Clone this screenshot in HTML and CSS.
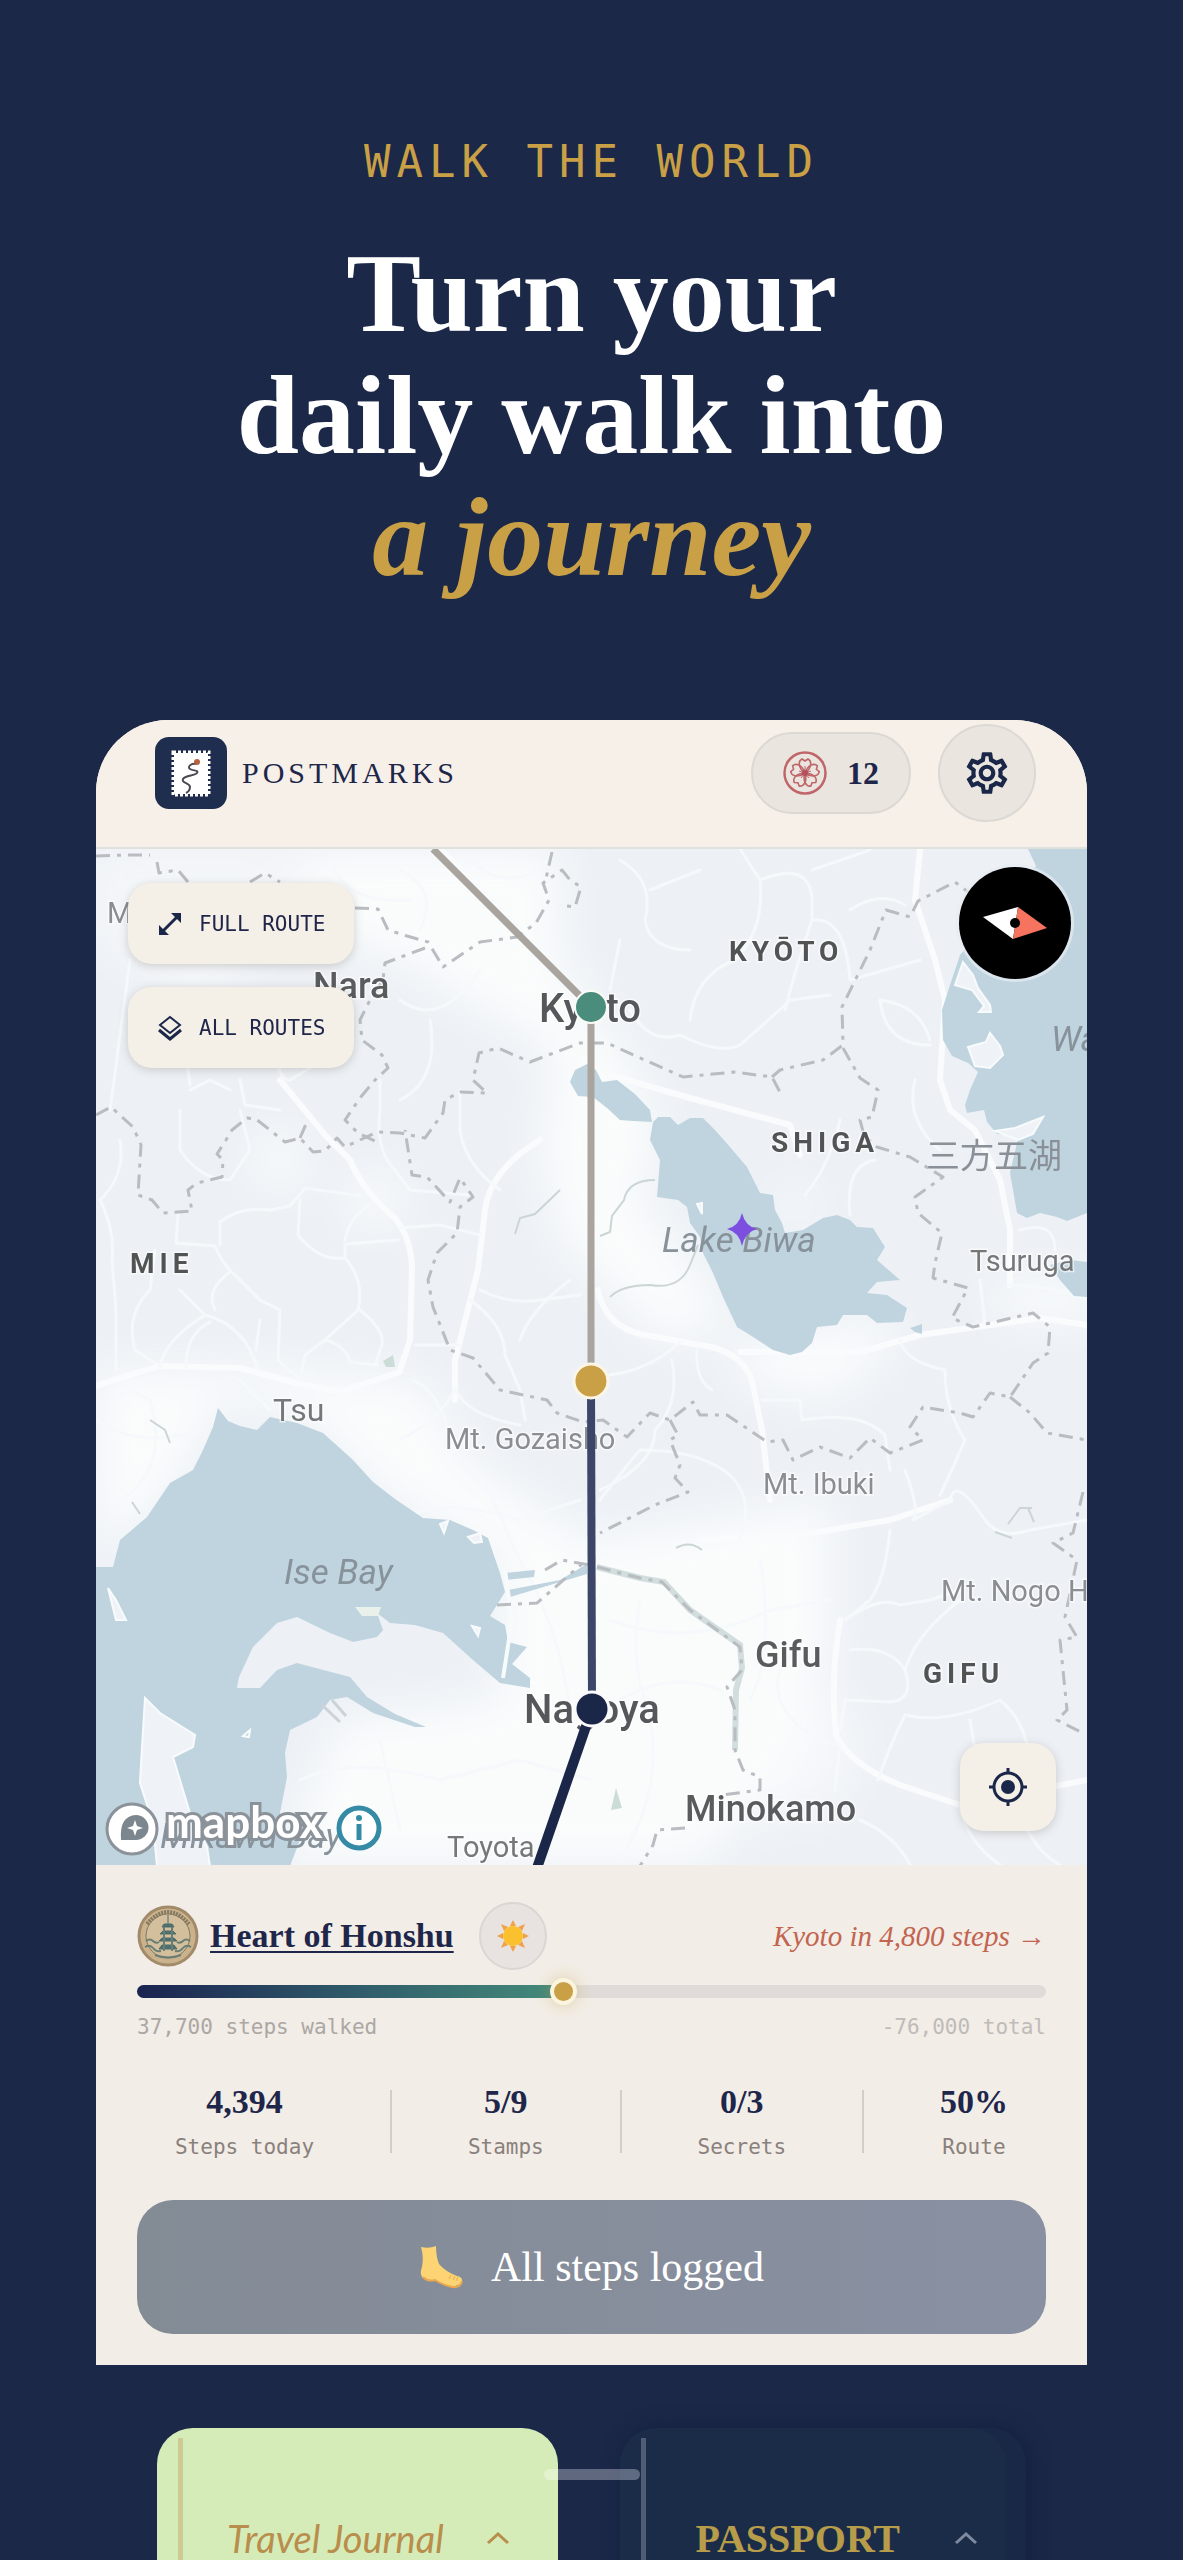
FILE: index.html
```html
<!DOCTYPE html>
<html lang="en">
<head>
  <meta charset="UTF-8" />
  <meta name="viewport" content="width=device-width, initial-scale=1.0" />
  <title>Postmarks - Walk the World</title>
  <link rel="stylesheet" href="styles.css">
</head>
<body>
  <header class="hero">
    <p class="eyebrow">WALK THE WORLD</p>
    <h1>Turn your<br>daily walk into<br><em>a journey</em></h1>
  </header>

  <main class="phone">
    <div class="topbar">
      <div class="brand">
        <svg class="brand-logo" viewBox="0 0 72 72" aria-hidden="true">
          <rect width="72" height="72" rx="14" fill="#1f2e4f"/>
          <rect x="19" y="16" width="34" height="41" fill="#fff"/>
          <rect x="18" y="15" width="36" height="43" fill="none" stroke="#fff" stroke-width="3" stroke-dasharray="3 2"/>
          <path d="M41 27c-5-1-9 3-6 5s9 1 7 4-12 2-14 6 7 4 7 8-2 5-4 6" fill="none" stroke="#4a4a52" stroke-width="2"/>
          <circle cx="42" cy="25" r="3" fill="#b5623f"/>
        </svg>
        <span class="brand-name">POSTMARKS</span>
      </div>
      <div class="topbar-actions">
        <button class="pill" type="button">
          <svg width="44" height="44" viewBox="0 0 44 44" fill="none" stroke="#c0656a" aria-hidden="true">
            <circle cx="22" cy="22" r="20.5" stroke-width="2.5"/>
            <g stroke-width="1.6">
              <path id="petal" d="M22 22C15 17 15 10 19 8l3 2 3-2c4 2 4 9-3 14z"/>
              <use href="#petal" transform="rotate(72 22 22)"/>
              <use href="#petal" transform="rotate(144 22 22)"/>
              <use href="#petal" transform="rotate(216 22 22)"/>
              <use href="#petal" transform="rotate(288 22 22)"/>
            </g>
            <path d="M22 15v7M16 20l6 2M28 20l-6 2M18 27l4-5M26 27l-4-5" stroke-width="1"/>
            <circle cx="22" cy="22" r="3" fill="#b0525c" stroke="none"/>
          </svg>
          <span>12</span>
        </button>
        <button class="round" type="button" aria-label="Settings">
          <svg width="50" height="50" viewBox="0 0 24 24" fill="#1b2748" aria-hidden="true">
            <path d="M19.43 12.98c.04-.32.07-.64.07-.98s-.03-.66-.07-.98l2.11-1.65c.19-.15.24-.42.12-.64l-2-3.46c-.09-.16-.26-.25-.44-.25-.06 0-.12.01-.17.03l-2.49 1c-.52-.4-1.08-.73-1.69-.98l-.38-2.65C14.46 2.18 14.25 2 14 2h-4c-.25 0-.46.18-.49.42l-.38 2.65c-.61.25-1.17.59-1.69.98l-2.49-1c-.06-.02-.12-.03-.18-.03-.17 0-.34.09-.43.25l-2 3.46c-.13.22-.07.49.12.64l2.11 1.65c-.04.32-.07.65-.07.98s.03.66.07.98l-2.11 1.65c-.19.15-.24.42-.12.64l2 3.46c.09.16.26.25.44.25.06 0 .12-.01.17-.03l2.49-1c.52.4 1.08.73 1.69.98l.38 2.65c.03.24.24.42.49.42h4c.25 0 .46-.18.49-.42l.38-2.65c.61-.25 1.17-.59 1.69-.98l2.49 1c.06.02.12.03.18.03.17 0 .34-.09.43-.25l2-3.46c.12-.22.07-.49-.12-.64l-2.11-1.65zm-1.98-1.71c.04.31.05.52.05.73 0 .21-.02.43-.05.73l-.14 1.13.89.7 1.08.84-.7 1.21-1.27-.51-1.04-.42-.9.68c-.43.32-.84.56-1.25.73l-1.06.43-.16 1.13-.2 1.35h-1.4l-.19-1.35-.16-1.13-1.06-.43c-.43-.18-.83-.41-1.23-.71l-.91-.7-1.06.43-1.27.51-.7-1.21 1.08-.84.89-.7-.14-1.13c-.03-.31-.05-.54-.05-.74s.02-.43.05-.73l.14-1.13-.89-.7-1.08-.84.7-1.21 1.27.51 1.04.42.9-.68c.43-.32.84-.56 1.25-.73l1.06-.43.16-1.13.2-1.35h1.39l.19 1.35.16 1.13 1.06.43c.43.18.83.41 1.23.71l.91.7 1.06-.43 1.27-.51.7 1.21-1.07.85-.89.7.14 1.13zM12 8c-2.21 0-4 1.79-4 4s1.79 4 4 4 4-1.79 4-4-1.79-4-4-4zm0 6c-1.1 0-2-.9-2-2s.9-2 2-2 2 .9 2 2-.9 2-2 2z"/>
          </svg>
        </button>
      </div>
    </div>

    <section class="map" aria-label="Route map">
      <svg class="map-canvas" viewBox="96 849 991 1016">
        <defs>
          <filter id="soft" x="-30%" y="-30%" width="160%" height="160%">
            <feGaussianBlur stdDeviation="22"/>
          </filter>
        </defs>
        <rect x="96" y="849" width="991" height="1016" fill="#edf1f6"/>

        <!-- built-up areas -->
        <g fill="#fafcfc" filter="url(#soft)">
          <path d="M300 849H560L560 960L600 1010L570 1060L480 1010L400 960L300 930Z"/>
          <path d="M96 849H300L280 930L200 1000L96 940Z" opacity=".6"/>
          <path d="M560 1010L620 1040L660 1130L640 1200L690 1260L730 1330L660 1340L610 1290L560 1240L540 1150Z"/>
          <path d="M96 1370L260 1370L420 1380L470 1460L590 1540L720 1520L830 1500L830 1640L800 1760L700 1865H280L340 1720L500 1700L500 1560L380 1490L300 1410L220 1400L180 1480L96 1560Z"/>
          <path d="M740 1340L880 1320L900 1340L830 1400L740 1380Z"/>
          <path d="M780 1190L820 1200L800 1225L780 1215Z"/>
          <circle cx="280" cy="1160" r="26"/>
          <circle cx="375" cy="1200" r="26"/>
          <circle cx="790" cy="1750" r="70" opacity=".6"/>
          <ellipse cx="1050" cy="1300" rx="60" ry="20"/>
        </g>

        <!-- major roads -->
        <g fill="none" stroke="#f9fbfd" stroke-width="6" stroke-linecap="round" stroke-linejoin="round">
          <path d="M280 1080L325 1135L350 1160Q362 1190 395 1218Q412 1240 412 1270L410 1340L400 1370"/>
          <path d="M96 1386L120 1378L160 1366L240 1368L300 1384L340 1392L400 1372"/>
          <path d="M598 1290Q605 1325 640 1334L700 1345Q740 1350 752 1380L762 1430L770 1500"/>
          <path d="M740 1352L860 1352L920 1335L1040 1318L1087 1325"/>
          <path d="M610 1075L690 1098L790 1125L800 1155"/>
          <path d="M940 1080L950 1110L975 1130L1000 1180L1010 1230L1010 1285"/>
          <path d="M920 850L915 900L935 960L945 1000L940 1080"/>
          <path d="M700 1540L800 1535L890 1520L950 1500"/>
          <path d="M840 1620Q830 1680 836 1735Q850 1765 900 1785L960 1805L1087 1780"/>
          <path d="M540 1140Q490 1170 485 1210L478 1270L455 1360L455 1400"/>
          <path d="M440 849L520 930L580 1000"/>
        </g>

        <!-- minor roads -->
        <g fill="none" stroke="#f5f9fb" stroke-width="3" stroke-linecap="round" stroke-linejoin="round">
          <path d="M120 1140Q126 1175 100 1200Q115 1230 112 1260L116 1310V1370"/>
          <path d="M180 1110V1150Q200 1180 230 1180L250 1150L240 1110"/>
          <path d="M178 1215L176 1243L215 1246Q222 1265 240 1280L260 1300L280 1310L278 1360L300 1380"/>
          <path d="M300 1200L298 1235Q320 1262 345 1258Q365 1280 358 1310L325 1340L305 1355L300 1380"/>
          <path d="M220 1245V1222Q240 1206 270 1210L290 1206L305 1188L360 1196"/>
          <path d="M360 1310Q385 1330 382 1345L375 1365M325 1340Q345 1345 350 1362L378 1365"/>
          <path d="M345 1258V1244L398 1240M345 1240Q350 1215 370 1205"/>
          <path d="M155 1250L150 1290Q125 1315 135 1350L160 1366"/>
          <path d="M180 1290L205 1315Q245 1325 258 1370M205 1315Q165 1340 160 1366M210 1322Q185 1335 186 1368"/>
          <path d="M230 1272Q205 1290 215 1310M260 1320L256 1350"/>
          <path d="M400 1228L440 1225L480 1235M480 1290Q510 1305 540 1300L580 1295"/>
          <path d="M470 1300Q505 1325 505 1355L520 1390L525 1420M520 1340Q530 1310 570 1280"/>
          <path d="M455 1388Q445 1415 400 1440M455 1388Q465 1415 520 1425"/>
          <path d="M415 1345L460 1345M412 1380Q440 1390 450 1440"/>
          <path d="M240 1080L245 1105L280 1110M380 1080V1110Q375 1150 395 1170L410 1190L470 1195"/>
          <path d="M460 1090V1130Q465 1165 500 1190"/>
          <path d="M740 849L760 880Q765 930 735 960Q695 975 690 1020M760 880Q810 860 812 900L812 920Q795 970 785 1010"/>
          <path d="M812 920Q845 915 850 980L920 960M812 870L870 850M850 910Q880 890 905 905"/>
          <path d="M620 860Q655 880 645 920Q650 950 690 950M620 940L610 990M650 890L700 870"/>
          <path d="M630 1010Q650 1045 680 1035Q720 1055 740 1045Q780 1010 790 1000L830 995"/>
          <path d="M880 1000Q885 1045 930 1045M880 1000Q920 1005 930 1040"/>
          <path d="M915 1080Q905 1120 940 1150M840 1120Q830 1165 805 1195M850 1215Q845 1165 875 1160"/>
          <path d="M610 1375Q650 1370 680 1342M672 1360Q680 1405 655 1430Q655 1465 600 1490"/>
          <path d="M697 1350Q695 1380 712 1390M762 1400L800 1400L802 1420Q860 1410 885 1435L890 1470"/>
          <path d="M900 1340Q905 1362 945 1370Q945 1410 965 1440Q952 1470 940 1495"/>
          <path d="M600 1500Q635 1455 640 1450Q700 1450 730 1475Q755 1500 740 1540"/>
          <path d="M905 1470Q920 1510 913 1520L950 1500Q955 1475 985 1520Q1000 1540 1030 1530L1087 1520"/>
          <path d="M890 1530Q885 1580 870 1600L845 1620Q880 1595 900 1605L930 1600L960 1590"/>
          <path d="M850 1650Q890 1645 905 1670Q915 1700 890 1702L845 1700L840 1730"/>
          <path d="M905 1670Q915 1635 960 1600M905 1715Q945 1725 1000 1700Q1025 1720 1030 1760"/>
          <path d="M905 1715Q890 1745 878 1780M970 1720L975 1750L1020 1745"/>
          <path d="M780 1700Q795 1735 840 1745L835 1790M780 1700Q770 1665 800 1650"/>
          <path d="M860 1820Q895 1835 910 1865M960 1805Q965 1840 1000 1865M1020 1800Q1025 1845 1060 1865"/>
          <path d="M610 1620Q690 1650 770 1610L830 1600M620 1700Q670 1670 720 1690"/>
          <path d="M640 1600Q630 1660 645 1700Q670 1780 620 1860M760 1560Q775 1650 750 1700"/>
          <path d="M400 1520Q440 1495 520 1520L580 1500M480 1470Q510 1540 520 1560Q565 1640 570 1720"/>
          <path d="M300 1780Q350 1755 440 1780L520 1760L590 1780M380 1740L400 1830"/>
          <path d="M96 1420Q140 1450 200 1430M130 1390L150 1400Q170 1470 120 1500M240 1380L270 1410"/>
          <path d="M230 1090L210 1080L190 1090M110 1110L130 960M180 1000L190 1085M280 1000Q270 1080 290 1080L340 1050"/>
          <path d="M400 1000Q440 1030 480 970M430 1020Q440 1080 400 1100"/>
          <path d="M400 870Q440 890 420 930M330 860Q345 905 410 900M470 860Q500 890 540 870"/>
          <path d="M1010 1285Q1050 1285 1087 1300M1020 1230Q1055 1220 1055 1250M980 1280L985 1325"/>
        </g>

        <!-- water -->
        <g fill="#bfd4df">
          <path d="M1028 849L1036 866L960 955L950 985L942 1010L943 1040L952 1056L968 1063L978 1072L970 1090L965 1105L967 1113L984 1110L987 1122L997 1134L1008 1135L1020 1130L1010 1173L1017 1213L1027 1218L1040 1213L1057 1217L1067 1221L1087 1213V849Z"/>
          <path d="M1050 1265L1070 1260L1087 1262V1297L1074 1296L1060 1280Z"/>
          <path d="M570 1082L575 1070L587 1064L596 1070L602 1082L617 1080L635 1094L650 1110L652 1122L633 1121L620 1120L607 1108L593 1097L578 1096Z"/>
          <path d="M653 1122L658 1117L670 1117L678 1125L690 1118L703 1118L715 1130L730 1147L747 1167L760 1193L773 1195L775 1210L782 1223L785 1233L803 1230L823 1218L837 1215L850 1220L857 1227L873 1228L885 1247L877 1260L900 1280L877 1282L867 1293L887 1295L907 1308L903 1322L877 1323L867 1315L843 1315L837 1325L817 1327L812 1343L802 1352L790 1355L773 1350L750 1335L737 1327L723 1297L713 1273L703 1253L700 1237L690 1223L687 1207L678 1200L657 1197L660 1160L650 1140Z"/>
          <path d="M910 1328L922 1324L922 1334L915 1332Z"/>
          <path d="M96 1567H113L120 1540L147 1517L170 1483L193 1470L203 1450L213 1427L218 1408L228 1421L240 1426L257 1430L270 1417L297 1423L323 1433L353 1460L373 1482L395 1499L423 1518L450 1520L473 1530L488 1538L500 1573L505 1592L490 1616L505 1625L508 1642L527 1647L512 1664L530 1678V1688L500 1683L473 1660L443 1633L415 1625L390 1623L377 1613L383 1630L377 1637L353 1642L330 1633L297 1617L277 1623L253 1647L239 1677L237 1688H260L277 1670L297 1663L350 1677L367 1697L395 1714L426 1727H415L373 1713L347 1697L330 1700L317 1717L290 1730L285 1753L287 1777L280 1813L286 1830L300 1840L290 1866H96Z"/>
          <path d="M505 1573L535 1570L534 1577L505 1580ZM508 1590L560 1580L587 1564V1574L510 1597Z"/>
        </g>
        <g fill="#eff3f8" stroke="#f8fbfc" stroke-width="2">
          <path d="M963 962L973 975L978 988L990 1005L991 1012H979L984 1006L972 990L955 985Z"/>
          <path d="M968 1047L986 1042L990 1033L1000 1046L1003 1055L990 1068L975 1066Z"/>
          <path d="M995 1131L1015 1128L1043 1117L1033 1134L1018 1140Z"/>
          <path d="M145 1698L160 1713L195 1735L193 1747L173 1757L183 1790L190 1813L207 1847L210 1866H157L153 1823L140 1783L142 1747Z"/>
          <path d="M108 1588L116 1600L126 1620H116Z"/>
          <path d="M697 1204L702 1203V1214Z"/>
          <path d="M440 1524L448 1521L444 1533ZM468 1537L480 1533L482 1542L474 1543ZM472 1626L480 1628L478 1636Z"/>
          <path d="M243 1736L250 1730L249 1737Z" fill="none"/>
        </g>
        <path d="M355 1607H381L378 1616H362Z" fill="#e9f1ea"/>
        <path d="M505 1570L512 1620L503 1678" fill="none" stroke="#f8fbfc" stroke-width="4"/>
        <path d="M322 1705L340 1722M332 1700L346 1716" stroke="#cbd2d8" stroke-width="3"/>

        <!-- parks and rivers -->
        <g fill="none" stroke="#ccd5d5" stroke-width="2">
          <path d="M515 1234L520 1218L535 1214L560 1190M610 1297Q622 1285 650 1285Q680 1290 690 1265L698 1245M600 1236L610 1232L612 1216L624 1200Q628 1180 655 1180"/>
          <path d="M150 1420L165 1430L170 1443M132 1502L140 1514M676 1548Q690 1540 702 1550"/>
          <path d="M995 1532L1012 1538M1008 1524L1020 1508L1032 1508M1028 1508L1034 1522"/>
        </g>
        <path d="M383 1361L393 1355L395 1367L386 1367Z" fill="#ccdcd6"/>
        <path d="M616 1788L622 1808L611 1810Z" fill="#ccdcd6"/>
        <path d="M597 1567L640 1578L664 1582L690 1610L740 1645L742 1668L736 1690L735 1750" fill="none" stroke="#d2dedd" stroke-width="6"/>

        <!-- prefecture borders -->
        <g fill="none" stroke="#b9bcc1" stroke-width="3" stroke-dasharray="14 7 4 7" stroke-linejoin="round">
          <path d="M96 1115L111 1107L133 1127L141 1145L138 1195L152 1200L163 1213L192 1211L188 1190L197 1183L222 1177L223 1160L217 1154L226 1140L232 1130L247 1118L256 1119L285 1142L300 1138L313 1152L325 1151L337 1138L345 1147L377 1132L400 1133L425 1138L443 1113L445 1100L460 1092L487 1093L473 1080L479 1053L498 1048L530 1062L580 1043L607 1043L638 1057L683 1077L734 1072L772 1077L782 1096"/>
          <path d="M772 1077L780 1070L823 1060L843 1045L842 1007L870 950L886 910L910 917L918 901L955 882L968 892"/>
          <path d="M843 1048L860 1078L878 1090L872 1117L860 1120L864 1135L877 1147L910 1157L943 1177L915 1197L918 1213L942 1233L935 1263L933 1278L968 1288L952 1318L973 1327L1033 1313L1050 1327L1048 1353L1033 1363L1010 1397L990 1393L973 1417L960 1413L923 1407L910 1427L923 1440L890 1453L870 1438L850 1458L820 1447L793 1460L783 1440L767 1442L727 1415L700 1415L693 1402L670 1420L650 1413L627 1437L603 1420L583 1422L557 1413L547 1400L500 1390L473 1358L450 1350L433 1307L428 1280L437 1253L457 1233L460 1207L473 1197L460 1178L450 1202L427 1177L412 1175L405 1130"/>
          <path d="M1010 1397L1030 1413L1047 1433L1087 1440"/>
          <path d="M670 1420L678 1435L670 1440L680 1465L675 1478L688 1492L655 1505L600 1533"/>
          <path d="M597 1567L640 1578L662 1582L670 1590L690 1610L740 1647L742 1670L727 1687L735 1710L735 1750L743 1770L760 1777V1790L723 1795M685 1828L657 1830L653 1845L640 1866"/>
          <path d="M497 1605L537 1603L583 1563M545 1570L562 1560L590 1565"/>
          <path d="M1083 1492L1073 1533L1053 1543L1077 1560L1065 1617L1077 1637L1060 1640L1067 1710L1057 1720L1083 1733"/>
          <path d="M96 856L125 855L150 855M157 862L159 873L178 870L188 882M250 882L265 873L280 882"/>
          <path d="M355 908L378 909L388 930L407 936L428 942L443 967L480 942L517 937L536 923L549 900L543 883L562 870L570 880L581 887L575 907L560 905M552 852L545 883"/>
          <path d="M425 948L385 963L383 980L370 1000L360 1020L362 1040L382 1055L388 1068L375 1080L360 1098L345 1120L358 1133L377 1142"/>
          <path d="M300 1138L306 1124"/>
        </g>

        <g class="place-name">
          <text x="107" y="923" class="peak">M</text>
          <text x="313" y="998" class="city">Nara</text>
          <text x="539" y="1022" class="capital">Kyoto</text>
          <text x="729" y="961" class="pref">KYŌTO</text>
          <text x="1051" y="1051" class="water">Wa</text>
          <text x="771" y="1152" class="pref">SHIGA</text>
          <text x="926" y="1168" class="cjk" lang="ja">三方五湖</text>
          <text x="662" y="1252" class="water">Lake Biwa</text>
          <text x="970" y="1271" class="town">Tsuruga</text>
          <text x="130" y="1273" class="pref">MIE</text>
          <text x="273" y="1421" class="town large">Tsu</text>
          <text x="445" y="1449" class="peak">Mt. Gozaisho</text>
          <text x="763" y="1494" class="peak">Mt. Ibuki</text>
          <text x="284" y="1584" class="water">Ise Bay</text>
          <text x="941" y="1601" class="peak">Mt. Nogo H</text>
          <text x="755" y="1667" class="city">Gifu</text>
          <text x="923" y="1683" class="pref">GIFU</text>
          <text x="524" y="1723" class="capital">Nagoya</text>
          <text x="685" y="1821" class="city">Minokamo</text>
          <text x="447" y="1857" class="town">Toyota</text>
          <text x="160" y="1848" class="water">Mikawa Bay</text>
        </g>

        <!-- route -->
        <path d="M433 849L591 1007V1381" fill="none" stroke="#a9a49e" stroke-width="7"/>
        <path d="M591 1381L592 1709" fill="none" stroke="#3b4668" stroke-width="8"/>
        <path d="M592 1709L537 1868" fill="none" stroke="#1b2748" stroke-width="10"/>
        <circle cx="591" cy="1007" r="16" fill="#4a8d7d" stroke="#fbfbf6" stroke-width="2"/>
        <circle cx="591" cy="1381" r="17" fill="#c9a045" stroke="#fbf6e6" stroke-width="3"/>
        <circle cx="592" cy="1709" r="17" fill="#1b2748" stroke="#fbfbfb" stroke-width="3"/>
        <path d="M742 1213Q745 1226 757 1229Q745 1232 742 1246Q739 1232 727 1229Q739 1226 742 1213Z" fill="#7c4fe0"/>

        <!-- attribution -->
        <circle cx="132" cy="1829" r="25" fill="#fff" stroke="#8b9299" stroke-width="3"/>
        <path d="M121 1840Q119 1816 136 1815A12.500 12.500 0 0 1 136 1840Z" fill="#7c868e"/>
        <path d="M135 1820L137 1826L143 1828L137 1830L135 1836L133 1830L127 1828L133 1826Z" fill="#fff"/>
        <text x="166" y="1838" class="wordmark">mapbox</text>
        <circle cx="359" cy="1828" r="20" fill="#fff" stroke="#358ba5" stroke-width="5"/>
        <path d="M359 1824V1840" fill="none" stroke="#358ba5" stroke-width="5"/>
        <circle cx="359" cy="1818" r="3" fill="#358ba5"/>
      </svg>

      <div class="map-filters">
        <button class="chip" type="button">
          <svg width="26" height="26" viewBox="0 0 26 26" aria-hidden="true">
            <path d="M5 21L21 5" stroke="#1b2748" stroke-width="3"/>
            <path d="M14 2h10v10zM2 14v10h10z" fill="#1b2748"/>
          </svg>
          FULL ROUTE
        </button>
        <button class="chip" type="button">
          <svg width="26" height="26" viewBox="0 0 26 26" fill="none" stroke="#1b2748" stroke-width="2" aria-hidden="true">
            <path d="M13 2L23 10L13 18L3 10Z"/>
            <path d="M2 15L13 24L24 15" stroke-width="3"/>
          </svg>
          ALL ROUTES
        </button>
      </div>

      <button class="compass" type="button" aria-label="Reset north">
        <svg width="112" height="112" viewBox="0 0 112 112" aria-hidden="true">
          <path d="M24 50L59 40L54 72Z" fill="#fff"/>
          <path d="M59 40L88 61L54 72Z" fill="#f5735f"/>
          <circle cx="56" cy="56" r="5"/>
        </svg>
      </button>

      <button class="locate" type="button" aria-label="My location">
        <svg width="38" height="38" viewBox="0 0 38 38" aria-hidden="true">
          <circle cx="19" cy="19" r="14" fill="none" stroke="#1b2748" stroke-width="3"/>
          <circle cx="19" cy="19" r="7" fill="#1b2748"/>
          <path d="M19 0v6M19 32v6M0 19h6M32 19h6" stroke="#1b2748" stroke-width="3"/>
        </svg>
      </button>
    </section>

    <section class="panel">
      <div class="route-row">
        <svg class="seal" viewBox="0 0 62 62" aria-hidden="true">
          <circle cx="31" cy="31" r="29" fill="#c9b28c" stroke="#a38a6a" stroke-width="3"/>
          <circle cx="31" cy="31" r="22" fill="#d3bf9b" stroke="#7d7a66" stroke-width="1"/>
          <path d="M10 19Q31 -5 52 19" fill="none" stroke="#85795f" stroke-width="4" stroke-dasharray="2 1"/>
          <path d="M31 10v9M27 19h8l2 3H25zM26 26h10l3 3H23zM25 33h12l3 3H22zM25 40h12l3 4H22z" fill="#4f6f6e" stroke="#4f6f6e"/>
          <path d="M27 22v24M35 22v24M9 36q4-3 7 0t6 1M8 42q5-3 8 1t8 3M53 36q-4-3-7 0t-6 1M54 42q-5-3-8 1t-8 3M18 50q13 5 26 0" fill="none" stroke="#6a7d74" stroke-width="2"/>
        </svg>
        <a class="route-name" href="#route">Heart of Honshu</a>
        <button class="weather" type="button" aria-label="Sunny">
          <svg width="34" height="34" viewBox="0 0 34 34" aria-hidden="true">
            <path d="M17 1l3 6h-6zM17 33l3-6h-6zM1 17l6-3v6zM33 17l-6-3v6zM5 5l7 3-4 4zM29 5l-3 7-4-4zM5 29l3-7 4 4zM29 29l-7-3 4-4z" fill="#f0a24a"/>
            <circle cx="17" cy="17" r="10" fill="#fbc02d"/>
          </svg>
        </button>
        <span class="next-stop">Kyoto in 4,800 steps →</span>
      </div>

      <div class="progress">
        <div class="progress-fill" style="width: 47%"></div>
      </div>
      <div class="progress-labels">
        <span>37,700 steps walked</span>
        <span class="total">-76,000 total</span>
      </div>

      <div class="stats">
        <div class="stat"><strong>4,394</strong><span>Steps today</span></div>
        <div class="divider"></div>
        <div class="stat"><strong>5/9</strong><span>Stamps</span></div>
        <div class="divider"></div>
        <div class="stat"><strong>0/3</strong><span>Secrets</span></div>
        <div class="divider"></div>
        <div class="stat"><strong>50%</strong><span>Route</span></div>
      </div>

      <button class="log-button" type="button">
        <svg width="44" height="44" viewBox="0 0 44 44" aria-hidden="true">
          <path d="M2 2Q10 4 17 1Q17 12 20 19Q27 27 38 31Q44 32 43 37Q42 40 38 40Q36 43 32 42Q22 39 16 35Q10 36 4 33Q0 29 3 22Q5 12 2 2Z" fill="#fdd473"/>
          <path d="M4 32Q9 37 16 35Q26 41 34 42Q41 43 43 36" fill="none" stroke="#eba94f" stroke-width="2"/>
          <path d="M36 31l-2 4M39 32l-2 4M32 30l-2 4" stroke="#eba94f"/>
        </svg>
        All steps logged
      </button>
    </section>
  </main>

  <nav class="dock">
    <div class="home-bar"></div>
    <a class="book journal" href="#journal">
      <span>Travel Journal</span>
      <svg width="24" height="14" viewBox="0 0 24 14" fill="none" stroke="currentColor" stroke-width="3" aria-hidden="true"><path d="M2 12L12 3L22 12"/></svg>
    </a>
    <a class="book passport" href="#passport">
      <span>PASSPORT</span>
      <svg width="24" height="14" viewBox="0 0 24 14" fill="none" stroke="#7f8a9e" stroke-width="3" aria-hidden="true"><path d="M2 12L12 3L22 12"/></svg>
    </a>
  </nav>
</body>
</html>
```

FILE: styles.css
```css
:root {
  --navy: #1b2848;
  --ink: #20264a;
  --gold: #c9a045;
  --paper: #f2ede6;
  --serif: "Liberation Serif", serif;
  --mono: "DejaVu Sans Mono", monospace;
}
*,
*::before,
*::after {
  box-sizing: border-box;
  margin: 0;
  padding: 0;
}
body {
  display: flex;
  flex-direction: column;
  min-height: 100vh;
  padding: 0 96px;
  background: var(--navy);
  color: var(--ink);
  font-family: var(--serif);
}
button {
  border: none;
  font: inherit;
  color: inherit;
  cursor: pointer;
}
a {
  color: inherit;
}

/* hero */
.hero {
  padding: 136px 0 122px;
  text-align: center;
}
.eyebrow {
  margin-bottom: 44px;
  font-family: var(--mono);
  font-size: 44px;
  line-height: 52px;
  letter-spacing: 6px;
  color: var(--gold);
}
.hero h1 {
  font-size: 112px;
  line-height: 122px;
  font-weight: bold;
  color: #fff;
}
.hero h1 em {
  color: var(--gold);
}

.phone {
  overflow: hidden;
  background: var(--paper);
  border-radius: 72px 72px 0 0;
}

/* top bar */
.topbar {
  display: flex;
  justify-content: space-between;
  align-items: center;
  padding: 4px 51px 25px 59px;
  background: #f6f0e9;
  border-bottom: 2px solid #dfe1dc;
}
.brand,
.topbar-actions {
  display: flex;
  align-items: center;
}
.brand {
  gap: 15px;
}
.brand-logo {
  width: 72px;
  height: 72px;
}
.brand-name {
  font-size: 30px;
  letter-spacing: 4px;
}
.topbar-actions {
  gap: 27px;
}
.pill,
.round {
  display: flex;
  justify-content: center;
  align-items: center;
  background: #eae6df;
  border: 2px solid #dcd8d3;
  border-radius: 50px;
}
.pill {
  gap: 20px;
  height: 82px;
  padding: 0 30px;
  font-size: 32px;
  font-weight: bold;
}
.round {
  width: 98px;
  height: 98px;
}

/* map */
.map {
  position: relative;
}
.map-canvas {
  display: block;
  width: 100%;
  height: auto;
}
.place-name text {
  font-family: Roboto, sans-serif;
  paint-order: stroke;
  stroke: rgba(255, 255, 255, 0.6);
  stroke-width: 3px;
}
.place-name .capital {
  font-size: 40px;
  font-weight: 500;
  fill: #55585a;
}
.place-name .city {
  font-size: 36px;
  font-weight: 500;
  fill: #595c5d;
}
.place-name .town {
  font-size: 29px;
  fill: #757779;
}
.place-name .large {
  font-size: 32px;
}
.place-name .peak {
  font-size: 29px;
  fill: #8a8d91;
}
.place-name .pref {
  font-size: 28px;
  font-weight: bold;
  letter-spacing: 5px;
  fill: #505455;
}
.place-name .water {
  font-size: 35px;
  font-style: italic;
  fill: #87929b;
  stroke: none;
}
.place-name .cjk {
  font-family: "Noto Sans CJK JP", sans-serif;
  font-size: 34px;
  fill: #8a9097;
  stroke: none;
}
.wordmark {
  font-family: Lato, sans-serif;
  font-size: 44px;
  font-weight: bold;
  fill: #fff;
  stroke: #8b9299;
  stroke-width: 6px;
  paint-order: stroke;
}
.map-filters {
  position: absolute;
  top: 34px;
  left: 32px;
  display: flex;
  flex-direction: column;
  gap: 23px;
}
.chip,
.locate {
  background: #f4efe7;
  border-radius: 24px;
  box-shadow: 0 2px 10px rgba(90, 80, 70, 0.25);
}
.chip {
  display: flex;
  align-items: center;
  gap: 16px;
  height: 81px;
  padding: 0 29px;
  font-family: var(--mono);
  font-size: 21px;
}
.compass {
  position: absolute;
  top: 18px;
  right: 16px;
  width: 112px;
  height: 112px;
  background: #000;
  border-radius: 50%;
  box-shadow: 0 0 0 3px rgba(230, 236, 242, 0.7);
}
.locate {
  position: absolute;
  right: 31px;
  bottom: 34px;
  display: flex;
  justify-content: center;
  align-items: center;
  width: 96px;
  height: 88px;
}

/* progress panel */
.panel {
  padding: 37px 41px 31px;
}
.route-row {
  display: flex;
  align-items: center;
}
.seal {
  width: 62px;
  height: 62px;
  margin-right: 11px;
}
.route-name {
  font-size: 34px;
  font-weight: bold;
  text-decoration-thickness: 2px;
  text-underline-offset: 4px;
}
.weather {
  display: flex;
  justify-content: center;
  align-items: center;
  width: 68px;
  height: 68px;
  margin-left: 25px;
  background: #e8e2e0;
  border: 2px solid #dbd6d5;
  border-radius: 50%;
}
.next-stop {
  margin-left: auto;
  font-size: 29px;
  font-style: italic;
  color: #c2644f;
}
.progress {
  height: 13px;
  margin-top: 15px;
  background: #e0dbd8;
  border-radius: 7px;
}
.progress-fill {
  position: relative;
  height: 100%;
  background: linear-gradient(90deg, #1b2350, #2f5a6a 50%, #458c7b);
  border-radius: 7px;
}
.progress-fill::after {
  content: "";
  position: absolute;
  top: -7px;
  right: -13px;
  width: 27px;
  height: 27px;
  background: var(--gold);
  border: 4px solid #fbf4de;
  border-radius: 50%;
  box-shadow: 0 0 16px rgba(201, 160, 69, 0.4);
}
.progress-labels {
  display: flex;
  justify-content: space-between;
  margin-top: 16px;
  font-family: var(--mono);
  font-size: 21px;
  line-height: 26px;
  color: #aba7a5;
}
.total {
  color: #bfbbb9;
}
.stats {
  display: flex;
  justify-content: space-around;
  align-items: center;
  margin-top: 42px;
}
.stat {
  display: flex;
  flex-direction: column;
  align-items: center;
  gap: 12px;
}
.stat strong {
  font-size: 34px;
  line-height: 40px;
}
.stat span {
  font-family: var(--mono);
  font-size: 21px;
  line-height: 26px;
  color: #8a807d;
}
.divider {
  width: 2px;
  height: 63px;
  background: #d3cecb;
}
.log-button {
  display: flex;
  justify-content: center;
  align-items: center;
  gap: 28px;
  width: 100%;
  height: 134px;
  margin-top: 40px;
  background: linear-gradient(90deg, #838b95, #8990a2);
  border-radius: 36px;
  font-size: 42px;
  color: #fff;
}

/* dock */
.dock {
  position: relative;
  display: flex;
  flex: 1;
  gap: 62px;
  min-height: 195px;
  padding: 63px 61px 0;
  overflow: hidden;
}
.book {
  position: relative;
  display: flex;
  flex: 1;
  justify-content: space-between;
  align-items: center;
  height: 220px;
  border-radius: 36px 36px 0 0;
  text-decoration: none;
}
.book::before {
  content: "";
  position: absolute;
  top: 10px;
  bottom: 0;
  left: 21px;
  width: 5px;
  background: #cfc993;
}
.journal {
  padding: 0 48px 0 70px;
  background: #d5ecb8;
  color: #b98d4b;
  font-family: Lato, sans-serif;
  font-size: 38px;
  font-style: italic;
}
.passport {
  padding: 0 48px 0 76px;
  background: #1b2c49;
  box-shadow: 4px 0 20px #152040, inset -20px 0 0 #1a2847;
  color: #b79c49;
  font-size: 40px;
  font-weight: bold;
}
.passport::before {
  background: #515d77;
}
.home-bar {
  position: absolute;
  z-index: 1;
  top: 104px;
  left: 50%;
  width: 96px;
  height: 11px;
  margin-left: -48px;
  background: rgba(255, 255, 255, 0.3);
  border-radius: 6px;
}
```
